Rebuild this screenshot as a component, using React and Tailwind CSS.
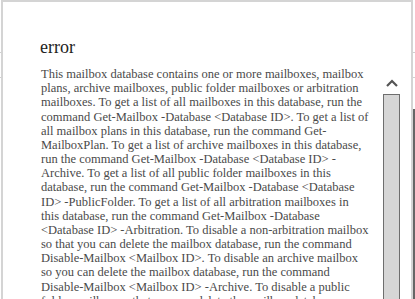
import React from "react";

const message =
  "This mailbox database contains one or more mailboxes, mailbox plans, archive mailboxes, public folder mailboxes or arbitration mailboxes. To get a list of all mailboxes in this database, run the command Get-Mailbox -Database <Database ID>. To get a list of all mailbox plans in this database, run the command Get-MailboxPlan. To get a list of archive mailboxes in this database, run the command Get-Mailbox -Database <Database ID> -Archive. To get a list of all public folder mailboxes in this database, run the command Get-Mailbox -Database <Database ID> -PublicFolder. To get a list of all arbitration mailboxes in this database, run the command Get-Mailbox -Database <Database ID> -Arbitration. To disable a non-arbitration mailbox so that you can delete the mailbox database, run the command Disable-Mailbox <Mailbox ID>. To disable an archive mailbox so you can delete the mailbox database, run the command Disable-Mailbox <Mailbox ID> -Archive. To disable a public folder mailbox so that you can delete the mailbox database, run the command Remove-Mailbox <Mailbox ID> -PublicFolder.";

const serif = { fontFamily: '"Liberation Serif", "Times New Roman", serif' };

const App = () => {
  return (
    <div className="relative h-[299px] w-[415px] overflow-hidden bg-white" style={serif}>
      {/* page behind the dialog */}
      <div className="flex flex-col pt-[52px]">
        <div className="h-[25px] border-t border-[#d0d0d0]" />
        <div className="h-[32px] border-t border-[#d0d0d0]" />
        <div className="flex justify-end">
          <div className="h-[190px] w-[3px] bg-[#666]" />
        </div>
      </div>

      {/* dialog */}
      <div className="absolute left-[1px] top-0 h-[320px] w-[412px] border-2 border-[#d4d4d4] bg-white">
        <h1 className="pl-[37px] pt-[35px] text-[18px] leading-[20px] text-[#222]">error</h1>

        <div className="mt-[10px] flex">
          <p className="ml-[38px] w-[328px] shrink-0 text-[12.5px] leading-[14.17px] text-[#4a4a4a]">
            {message}
          </p>

          <div className="ml-[14px] flex w-[17px] flex-col items-center">
            <svg width="12" height="8" viewBox="0 0 12 8" className="mt-[12px]">
              <path d="M1 7 L6 2 L11 7" fill="none" stroke="#555" strokeWidth="2.2" />
            </svg>
            <div className="mt-[7px] h-[220px] w-[17px] border border-[#6e6e6e] bg-[#d6d6d6]" />
          </div>
        </div>
      </div>
    </div>
  );
};

export default App;
